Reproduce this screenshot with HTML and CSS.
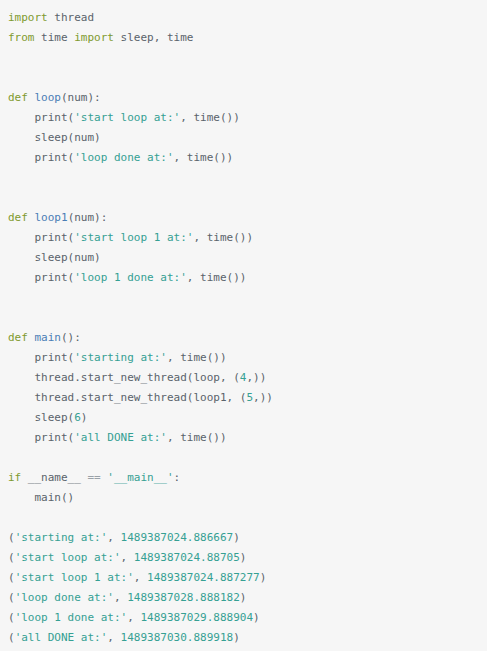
FILE: index.html
```html
<!DOCTYPE html>
<html>
<head>
<meta charset="utf-8">
<link rel="stylesheet" href="styles.css">
</head>
<body>
<pre class="code"><span class="kw">import</span> thread
<span class="kw">from</span> time <span class="kw">import</span> sleep, time


<span class="kw">def</span> <span class="fn">loop</span>(num):
    print(<span class="st">'start loop at:'</span>, time())
    sleep(num)
    print(<span class="st">'loop done at:'</span>, time())


<span class="kw">def</span> <span class="fn">loop1</span>(num):
    print(<span class="st">'start loop 1 at:'</span>, time())
    sleep(num)
    print(<span class="st">'loop 1 done at:'</span>, time())


<span class="kw">def</span> <span class="fn">main</span>():
    print(<span class="st">'starting at:'</span>, time())
    thread.start_new_thread(loop, (<span class="nu">4</span>,))
    thread.start_new_thread(loop1, (<span class="nu">5</span>,))
    sleep(<span class="nu">6</span>)
    print(<span class="st">'all DONE at:'</span>, time())

<span class="kw">if</span> __name__ <span class="op">==</span> <span class="st">'__main__'</span>:
    main()

(<span class="st">'starting at:'</span>, <span class="nu">1489387024.886667</span>)
(<span class="st">'start loop at:'</span>, <span class="nu">1489387024.88705</span>)
(<span class="st">'start loop 1 at:'</span>, <span class="nu">1489387024.887277</span>)
(<span class="st">'loop done at:'</span>, <span class="nu">1489387028.888182</span>)
(<span class="st">'loop 1 done at:'</span>, <span class="nu">1489387029.888904</span>)
(<span class="st">'all DONE at:'</span>, <span class="nu">1489387030.889918</span>)</pre>
</body>
</html>
```
FILE: styles.css
```css
html, body {
  margin: 0;
  padding: 0;
  background: #f6f6f6;
}
.code {
  margin: 0;
  padding: 8px 8px 9px 8px;
  min-height: 651px;
  box-sizing: border-box;
  background: #f6f6f6;
  font-family: "DejaVu Sans Mono", "Liberation Mono", monospace;
  font-size: 11px;
  line-height: 20px;
  color: #5a636b;
  white-space: pre;
}
.kw { color: #7f9a2f; }
.fn { color: #4a7db5; }
.st { color: #35a093; }
.nu { color: #35a093; }
.op { color: #9aa2a8; }
```
